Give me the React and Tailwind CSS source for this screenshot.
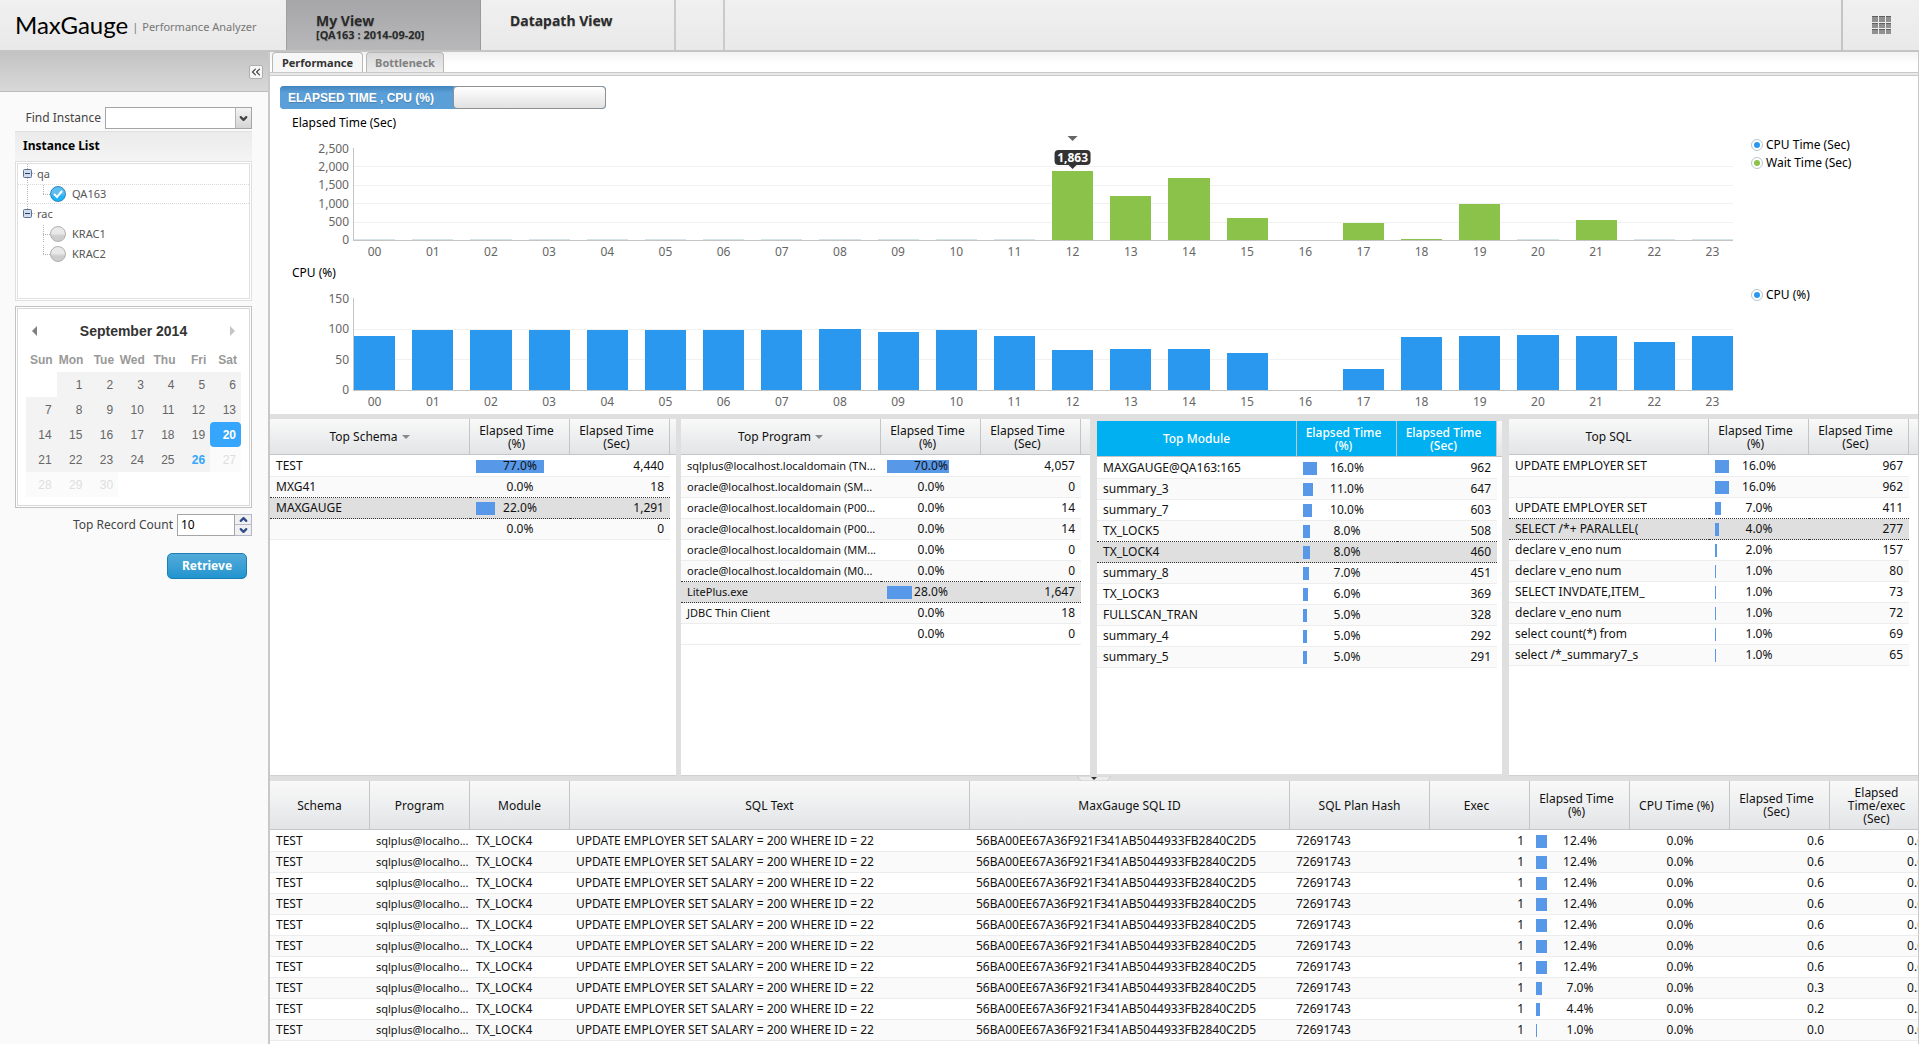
import { useState } from 'react';
import { ChevronDown, ChevronUp, ChevronsLeft } from 'lucide-react';

const HOURS = Array.from({ length: 24 }, (_, i) => String(i).padStart(2, '0'));

const ELAPSED = [20, 20, 20, 20, 20, 20, 20, 20, 20, 20, 20, 20, 1863, 1190, 1690, 595, 0, 450, 30, 965, 20, 545, 20, 20];
const CPU = [88, 98, 98, 98, 98, 98, 98, 98, 99, 95, 98, 88, 65, 67, 67, 61, 0, 34, 86, 88, 89, 88, 78, 88];

const SCHEMAS = [
  ['TEST', 77, '4,440'],
  ['MXG41', 0, '18'],
  ['MAXGAUGE', 22, '1,291'],
  ['', 0, '0'],
];

const PROGRAMS = [
  ['sqlplus@localhost.localdomain (TN...', 70, '4,057'],
  ['oracle@localhost.localdomain (SM...', 0, '0'],
  ['oracle@localhost.localdomain (P00...', 0, '14'],
  ['oracle@localhost.localdomain (P00...', 0, '14'],
  ['oracle@localhost.localdomain (MM...', 0, '0'],
  ['oracle@localhost.localdomain (M0...', 0, '0'],
  ['LitePlus.exe', 28, '1,647'],
  ['JDBC Thin Client', 0, '18'],
  ['', 0, '0'],
];

const MODULES = [
  ['MAXGAUGE@QA163:165', 16, '962'],
  ['summary_3', 11, '647'],
  ['summary_7', 10, '603'],
  ['TX_LOCK5', 8, '508'],
  ['TX_LOCK4', 8, '460'],
  ['summary_8', 7, '451'],
  ['TX_LOCK3', 6, '369'],
  ['FULLSCAN_TRAN', 5, '328'],
  ['summary_4', 5, '292'],
  ['summary_5', 5, '291'],
];

const SQLS = [
  ['UPDATE EMPLOYER SET', 16, '967'],
  ['', 16, '962'],
  ['UPDATE EMPLOYER SET', 7, '411'],
  ['SELECT /*+ PARALLEL(', 4, '277'],
  ['declare v_eno num', 2, '157'],
  ['declare v_eno num', 1, '80'],
  ['SELECT INVDATE,ITEM_', 1, '73'],
  ['declare v_eno num', 1, '72'],
  ['select count(*) from', 1, '69'],
  ['select /*_summary7_s', 1, '65'],
];

// [elapsed %, elapsed sec]
const SQL_ROWS = [
  [12.4, '0.6'],
  [12.4, '0.6'],
  [12.4, '0.6'],
  [12.4, '0.6'],
  [12.4, '0.6'],
  [12.4, '0.6'],
  [12.4, '0.6'],
  [7, '0.3'],
  [4.4, '0.2'],
  [1, '0.0'],
];

const WEEKS = [
  [null, 1, 2, 3, 4, 5, 6],
  [7, 8, 9, 10, 11, 12, 13],
  [14, 15, 16, 17, 18, 19, 20],
  [21, 22, 23, 24, 25, 26, 27],
  [28, 29, 30, null, null, null, null],
];

function Header() {
  return (
    <header className="flex h-[52px] shrink-0 border-b-2 border-[#c4c4c4] bg-linear-to-b from-[#f0f0f0] to-[#e9e9e9]">
      <div className="flex w-[287px] shrink-0 items-center gap-1 border-r border-[#a0a0a0] pl-[15px]">
        <h1 className="font-['Lato',sans-serif] text-2xl leading-6 text-black">MaxGauge</h1>
        <span className="flex gap-1 pt-1 text-[11px] whitespace-nowrap text-[#777]">
          <span>|</span>
          Performance Analyzer
        </span>
      </div>
      <nav className="flex">
        <button type="button" className="flex w-[194px] flex-col items-start justify-center border-r border-[#999] bg-linear-to-b from-[#a6a6a8] to-[#b8b8ba] pt-1 pl-[29px] text-left font-bold text-[#2b2b2b] text-shadow-xs">
          <span className="text-sm leading-4">My View</span>
          <span className="text-[11px] leading-3">[QA163 : 2014-09-20]</span>
        </button>
        <button type="button" className="flex w-[195px] items-start border-r-2 border-[#cacaca] pt-3 pl-[29px] text-sm leading-[18px] font-bold text-[#2b2b2b] text-shadow-xs">
          Datapath View
        </button>
        <div className="w-[49px] border-r-2 border-[#cacaca]" />
      </nav>
      <div className="flex-1" />
      <button type="button" aria-label="Menu" className="flex w-[78px] items-center justify-center border-l-2 border-[#c4c4c4]">
        <svg width="19" height="19" viewBox="0 0 19 19" className="fill-[#909090]">
          {[0, 7, 13].map((y) =>
            [0, 7, 14].map((x) => (
              <g key={`${x}-${y}`}>
                <rect x={x} y={y} width={x === 14 ? 5 : 6} height={y === 0 ? 6 : 5} />
                <rect x={x} y={y} width={x === 14 ? 5 : 6} height="1" className="fill-[#606060]" />
              </g>
            ))
          )}
        </svg>
      </button>
    </header>
  );
}

function Expander({ last }) {
  return (
    <svg width="19" height="20" viewBox="0 0 19 20" className="shrink-0">
      <path d={last ? 'M9.5 0V6' : 'M9.5 0V20'} stroke="#b5b5b5" strokeDasharray="1 1" />
      <rect x="5.5" y="5.5" width="8" height="8" rx="1" fill="#d3dcea" stroke="#5f7192" />
      <path d="M7 9.5h5" stroke="#1d3c78" />
      <path d="M14 9.5h3" stroke="#b5b5b5" strokeDasharray="1 1" />
    </svg>
  );
}

function TreeItem({ name, checked, onChange, last, trunk }) {
  return (
    <li className={checked ? 'border-y border-dotted border-[#dcdcdc]' : 'border-y border-transparent'}>
      <label className="flex h-[18px] items-center">
        <svg width="32" height="18" viewBox="0 0 32 18" className="shrink-0">
          {trunk && <path d="M9.5 0V18" stroke="#b5b5b5" strokeDasharray="1 1" />}
          <path d={last ? 'M25.5 0V9' : 'M25.5 0V18'} stroke="#b5b5b5" strokeDasharray="1 1" />
          <path d="M25 9.5h7" stroke="#b5b5b5" strokeDasharray="1 1" />
        </svg>
        <span className="grid shrink-0 place-items-center">
          <input
            type="checkbox"
            checked={checked}
            onChange={onChange}
            className="col-start-1 row-start-1 size-4 appearance-none rounded-full border border-[#b0b0b0] bg-linear-to-b from-[#e9e9e9] from-45% to-[#cdcdcd] to-65% checked:border-[#2a87bd] checked:from-[#5fbdf0] checked:to-[#1fb4fa]"
          />
          {checked && (
            <svg width="10" height="10" viewBox="0 0 10 10" className="pointer-events-none col-start-1 row-start-1">
              <path d="M1 5l3 3 5-6" fill="none" stroke="#fff" strokeWidth="2" />
            </svg>
          )}
        </span>
        <span className="pl-1.5">{name}</span>
      </label>
    </li>
  );
}

function InstanceTree() {
  const [selected, setSelected] = useState('QA163');
  const item = (name, props) => (
    <TreeItem name={name} checked={selected === name} onChange={() => setSelected(name)} {...props} />
  );

  return (
    <section>
      <h2 className="h-[30px] border-t border-[#e0e0e0] bg-linear-to-b from-[#ebebeb] to-[#f4f4f4] pl-2 text-xs leading-7 font-bold text-black">
        Instance List
      </h2>
      <div className="h-[140px] border border-[#e0e0e0] bg-white p-px">
        <ul className="h-full border border-[#e0e0e0] text-[11px] text-[#555]">
          <li>
            <div className="flex h-5 items-center"><Expander />qa</div>
            <ul>{item('QA163', { last: true, trunk: true })}</ul>
          </li>
          <li>
            <div className="flex h-5 items-center"><Expander last />rac</div>
            <ul>
              {item('KRAC1', {})}
              {item('KRAC2', { last: true })}
            </ul>
          </li>
        </ul>
      </div>
    </section>
  );
}

function dayClass(day) {
  if (day === 20) return 'rounded-sm bg-[#35a6fb] font-bold text-white';
  if (day === 26) return 'bg-[#f3f3f3] font-bold text-[#35a6fb]';
  if (day > 26) return 'bg-[#fbfbfb] text-[#dedede]';
  return 'bg-[#f3f3f3] text-[#666]';
}

function Calendar() {
  return (
    <section className="mt-[5px] border border-[#c2c2c2] bg-white p-px">
      <div className="border border-[#d8d8d8] px-2 pb-2 font-['Liberation_Sans',Arial,sans-serif]">
        <div className="flex h-[43px] items-center justify-between px-1.5">
          <button type="button" aria-label="Previous month" className="h-0 w-0 border-y-5 border-r-5 border-y-transparent border-r-[#808080]" />
          <h2 className="text-sm font-bold text-[#333]">September 2014</h2>
          <button type="button" aria-label="Next month" className="h-0 w-0 border-y-5 border-l-5 border-y-transparent border-l-[#c4c4c4]" />
        </div>
        <table className="w-full table-fixed text-right text-xs">
          <thead>
            <tr className="h-[18px] text-[#999]">
              {['Sun', 'Mon', 'Tue', 'Wed', 'Thu', 'Fri', 'Sat'].map((d) => (
                <th key={d} className="pr-1 pb-1 text-right font-bold">{d}</th>
              ))}
            </tr>
          </thead>
          <tbody>
            {WEEKS.map((week, i) => (
              <tr key={i} className="h-[25px]">
                {week.map((day, j) => (
                  <td key={j} className="p-0">
                    {day && (
                      <button type="button" className={`block h-[25px] w-full pr-[5px] text-right ${dayClass(day)}`}>
                        {day}
                      </button>
                    )}
                  </td>
                ))}
              </tr>
            ))}
          </tbody>
        </table>
      </div>
    </section>
  );
}

function Sidebar() {
  const [count, setCount] = useState(10);

  return (
    <aside className="w-[270px] shrink-0 border-r-2 border-[#c8c8c8] bg-[#fafafa] text-[#444]">
      <div className="flex h-10 items-center justify-end border-b border-[#bdbdbd] bg-linear-to-b from-[#c3c3c3] to-[#d8d8d8] pr-[5px]">
        <button type="button" aria-label="Collapse sidebar" className="flex h-3.5 w-3.5 items-center justify-center rounded-xs border border-[#b0b0b0] bg-[#f6f6f6] text-[#444]">
          <ChevronsLeft size={14} className="shrink-0" />
        </button>
      </div>
      <div className="pt-[15px] pr-4 pl-[15px]">
        <div className="flex items-center justify-end gap-1">
          <label htmlFor="instance">Find Instance</label>
          <div className="relative">
            <select id="instance" className="block h-[22px] w-[147px] appearance-none border border-[#a5a5a5] bg-white px-1" />
            <span className="pointer-events-none absolute inset-y-px right-px flex w-4 items-center justify-center border-l border-[#b5b5b5] bg-linear-to-b from-[#f4f4f4] to-[#d4d4d4] text-[#444]">
              <ChevronDown size={11} strokeWidth={5} />
            </span>
          </div>
        </div>
        <div className="h-0.5" />
        <InstanceTree />
        <Calendar />
        <div className="mt-1.5 flex items-center justify-end gap-1">
          <label htmlFor="count">Top Record Count</label>
          <div className="flex h-[22px] w-[75px]">
            <input
              id="count"
              type="text"
              value={count}
              onChange={(e) => setCount(Number(e.target.value) || 0)}
              className="w-[58px] border border-[#a5a5a5] bg-white px-[3px] text-black"
            />
            <span className="flex flex-1 flex-col border border-l-0 border-[#b5b8c8] bg-[#f0f0f0] text-[#304c8c]">
              <button type="button" aria-label="Increase" onClick={() => setCount(count + 1)} className="flex h-2.5 items-center justify-center overflow-hidden border-b border-[#b5b8c8]">
                <ChevronUp size={11} strokeWidth={5} className="shrink-0" />
              </button>
              <button type="button" aria-label="Decrease" onClick={() => setCount(count - 1)} className="flex h-2.5 items-center justify-center overflow-hidden">
                <ChevronDown size={11} strokeWidth={5} className="shrink-0" />
              </button>
            </span>
          </div>
        </div>
        <div className="mt-[17px] flex justify-end pr-[5px]">
          <button type="button" className="h-[26px] w-20 rounded-[5px] border border-[#1b7fb5] bg-linear-to-b from-[#52abd9] to-[#2094cf] font-bold text-white">
            Retrieve
          </button>
        </div>
      </div>
    </aside>
  );
}

function Legend({ label, color }) {
  return (
    <label className="flex h-[18px] items-center gap-[3px] text-black">
      <input
        type="checkbox"
        defaultChecked
        className={`size-3 appearance-none rounded-full border border-[#b9c6cf] bg-clip-content p-0.5 ${color}`}
      />
      {label}
    </label>
  );
}

function BarChart({ title, values, max, ticks, color, idle, marker, legend }) {
  return (
    <section>
      <h3 className="h-4 pl-[22px] leading-4 text-black">{title}</h3>
      <div className="mt-[17px] flex">
        <div className="flex h-[93px] w-[84px] shrink-0 flex-col justify-between border-r border-[#c4c4c4] pr-1 text-right text-[#666]">
          {ticks.map((t) => (
            <span key={t} className="flex h-px items-center justify-end">{t}</span>
          ))}
        </div>
        <div className="min-w-0 flex-1">
          <div className="grid">
            <div className="col-start-1 row-start-1 flex h-[93px] flex-col justify-between">
              {ticks.map((t, i) => (
                <div key={t} className={i === 0 ? 'h-px' : 'h-px bg-[#f1f1f1]'} />
              ))}
            </div>
            <div className="z-10 col-start-1 row-start-1 grid h-[93px] grid-cols-24 items-end gap-[17px] border-b border-[#c4c4c4]">
              {values.map((v, i) => (
                <div
                  key={i}
                  className={`relative ${v > max / 100 ? color : idle}`}
                  style={{ height: `${v > 0 ? Math.max(1, Math.round((v / max) * 92)) : 0}px` }}
                >
                  {marker === i && (
                    <div className="absolute bottom-full left-1/2 mb-0.5 flex -translate-x-1/2 flex-col items-center">
                      <span className="mb-[9px] h-0 w-0 border-x-5 border-t-5 border-x-transparent border-t-[#666]" />
                      <span className="h-[15px] rounded-sm bg-[#333] px-[3px] text-xs leading-[15px] font-bold text-white">
                        {v.toLocaleString('en-US')}
                      </span>
                      <span className="h-0 w-0 border-x-4 border-t-4 border-x-transparent border-t-[#333]" />
                    </div>
                  )}
                </div>
              ))}
            </div>
          </div>
          <div className="grid grid-cols-24 gap-[17px] pt-[3px] text-center leading-4 text-[#666]">
            {HOURS.map((h) => (
              <span key={h}>{h}</span>
            ))}
          </div>
        </div>
        <div className="-mt-3 w-[185px] shrink-0 pl-[18px]">{legend}</div>
      </div>
    </section>
  );
}

function HeadCell({ children, active, numeric }) {
  return (
    <th
      className={`border-r border-b border-[#c5c5c5] leading-[13px] ${numeric ? 'pr-2.5 pl-1' : 'px-1'} ${
        active ? 'bg-[#00b0f0] font-medium text-white' : 'bg-linear-to-b from-[#f9f9f9] to-[#e2e4e6] font-normal'
      }`}
    >
      {children}
    </th>
  );
}

function PercentCell({ value, className }) {
  return (
    <td className={`px-1.5 ${className}`}>
      <div className="grid items-center">
        <div className="col-start-1 row-start-1 h-[13px] bg-[#5898e8]" style={{ width: `${value}%` }} />
        <span className="col-start-1 row-start-1 text-center">{value.toFixed(1)}%</span>
      </div>
    </td>
  );
}

function rowClass(i, selected) {
  const bg = i === selected ? 'bg-[#dfdfdf]' : i % 2 ? 'bg-[#fafafa]' : 'bg-white';
  const line = i === selected || i === selected - 1 ? 'border-dotted border-b-[#333]' : 'border-b-[#ededed]';
  return `border-b ${bg} ${line} ${i === 0 ? 'border-t border-t-white' : ''}`;
}

function TopPanel({ title, rows, selected, sortable, active, nameClass = '' }) {
  return (
    <section className={`min-w-0 overflow-hidden bg-white ${active ? 'border-2 border-[#dfdfdf]' : 'border-b border-[#d0d0d0]'}`}>
      <table className="w-full table-fixed border-separate border-spacing-0">
        <colgroup>
          <col className="w-[200px]" />
          <col className="w-[100px]" />
          <col className="w-[100px]" />
          <col />
        </colgroup>
        <thead>
          <tr className="h-9">
            <HeadCell active={active}>
              <span className="inline-flex items-center gap-1">
                {title}
                {sortable && <span className="h-0 w-0 border-x-4 border-t-4 border-x-transparent border-t-[#888]" />}
              </span>
            </HeadCell>
            <HeadCell active={active} numeric>Elapsed Time<br />(%)</HeadCell>
            <HeadCell active={active} numeric>Elapsed Time<br />(Sec)</HeadCell>
            <th className="border-b border-[#c5c5c5] bg-linear-to-b from-[#f9f9f9] to-[#e2e4e6]" />
          </tr>
        </thead>
        <tbody>
          {rows.map(([name, pct, sec], i) => {
            const cls = rowClass(i, selected);
            return (
              <tr key={i} className={i === 0 ? 'h-[22px]' : 'h-[21px]'}>
                <td className={`pl-1.5 whitespace-nowrap ${nameClass} ${cls}`}>{name}</td>
                <PercentCell value={pct} className={cls} />
                <td className={`pr-1.5 text-right ${cls}`}>{sec}</td>
                <td />
              </tr>
            );
          })}
        </tbody>
      </table>
    </section>
  );
}

function SqlTable() {
  return (
    <section className="shrink-0 overflow-hidden bg-white pb-[3px]">
      <table className="w-[1660px] table-fixed border-separate border-spacing-0">
        <colgroup>
          <col className="w-[100px]" />
          <col className="w-[100px]" />
          <col className="w-[100px]" />
          <col className="w-[400px]" />
          <col className="w-[320px]" />
          <col className="w-[140px]" />
          <col className="w-[100px]" />
          <col className="w-[100px]" />
          <col className="w-[100px]" />
          <col className="w-[100px]" />
          <col className="w-[100px]" />
        </colgroup>
        <thead>
          <tr className="h-[49px]">
            <HeadCell>Schema</HeadCell>
            <HeadCell>Program</HeadCell>
            <HeadCell>Module</HeadCell>
            <HeadCell>SQL Text</HeadCell>
            <HeadCell>MaxGauge SQL ID</HeadCell>
            <HeadCell>SQL Plan Hash</HeadCell>
            <HeadCell numeric>Exec</HeadCell>
            <HeadCell numeric>Elapsed Time<br />(%)</HeadCell>
            <HeadCell numeric>CPU Time (%)</HeadCell>
            <HeadCell numeric>Elapsed Time<br />(Sec)</HeadCell>
            <HeadCell numeric>Elapsed<br />Time/exec<br />(Sec)</HeadCell>
          </tr>
        </thead>
        <tbody>
          {SQL_ROWS.map(([pct, sec], i) => {
            const cls = rowClass(i, -1);
            return (
              <tr key={i} className={i === 0 ? 'h-[22px]' : 'h-[21px]'}>
                <td className={`pl-1.5 ${cls}`}>TEST</td>
                <td className={`pl-1.5 text-[11px] whitespace-nowrap ${cls}`}>sqlplus@localho...</td>
                <td className={`pl-1.5 ${cls}`}>TX_LOCK4</td>
                <td className={`pl-1.5 ${cls}`}>UPDATE EMPLOYER SET SALARY = 200 WHERE ID = 22</td>
                <td className={`pl-1.5 ${cls}`}>56BA00EE67A36F921F341AB5044933FB2840C2D5</td>
                <td className={`pl-1.5 ${cls}`}>72691743</td>
                <td className={`pr-1.5 text-right ${cls}`}>1</td>
                <PercentCell value={pct} className={cls} />
                <td className={`text-center ${cls}`}>0.0%</td>
                <td className={`pr-1.5 text-right ${cls}`}>{sec}</td>
                <td className={`pr-1.5 text-right ${cls}`}>{sec}</td>
              </tr>
            );
          })}
        </tbody>
      </table>
    </section>
  );
}

export default function App() {
  const [wide, setWide] = useState(false);

  return (
    <div className="flex min-h-screen flex-col bg-white font-['Noto_Sans','Open_Sans',sans-serif] text-xs leading-4 text-[#111]">
      <Header />
      <div className="flex flex-1">
        <Sidebar />
        <main className="flex min-w-0 flex-1 flex-col overflow-hidden border-r border-[#c8c8c8]">
          <div role="tablist" className="flex h-[21px] items-end gap-[3px] border-b border-[#c8c8c8] bg-linear-to-b from-[#f2f2f2] to-white to-60% pl-0.5 text-[11px] font-bold">
            <button type="button" role="tab" aria-selected="true" className="h-5 w-[91px] rounded-t-sm border border-b-0 border-[#b8b8b8] bg-[#f7f7f7] text-[#333]">
              Performance
            </button>
            <button type="button" role="tab" aria-selected="false" className="h-5 w-[78px] rounded-t-sm border border-b-0 border-[#b8b8b8] bg-linear-to-b from-[#d8d8d8] to-[#ececec] text-[#808080]">
              Bottleneck
            </button>
          </div>
          <div className="h-[3px] border-b border-[#c8c8c8] bg-[#e9e9e9]" />

          <div className="pt-2.5 pb-1">
            <button
              type="button"
              role="switch"
              aria-checked={wide}
              onClick={() => setWide(!wide)}
              className="mb-1.5 ml-2.5 flex h-[23px] w-[326px] overflow-hidden rounded-[4px] bg-[#5b9fd8] font-['Liberation_Sans',Arial,sans-serif] font-bold text-white"
            >
              <span className="flex h-full flex-1 items-center bg-linear-to-b from-[#4284bd] to-[#5b9fd8] to-30% pl-2 text-shadow-xs">
                ELAPSED TIME , CPU (%)
              </span>
              <span className="h-full w-[153px] rounded-[4px] border border-[#909090] bg-linear-to-b from-white to-[#e2e2e2]" />
            </button>
            <div className="flex flex-col gap-[5px]">
              <BarChart
                title="Elapsed Time (Sec)"
                values={ELAPSED}
                max={2500}
                ticks={['2,500', '2,000', '1,500', '1,000', '500', '0']}
                color="bg-[#8bc34a]"
                idle="bg-[#d5e4e6]"
                marker={12}
                legend={
                  <>
                    <Legend label="CPU Time (Sec)" color="checked:bg-[#2b98f0]" />
                    <Legend label="Wait Time (Sec)" color="checked:bg-[#8bc34a]" />
                  </>
                }
              />
              <BarChart
                title="CPU (%)"
                values={CPU}
                max={150}
                ticks={['150', '100', '50', '0']}
                color="bg-[#2b98f0]"
                idle="bg-white"
                legend={<Legend label="CPU (%)" color="checked:bg-[#2b98f0]" />}
              />
            </div>
          </div>

          <div className="grid flex-1 grid-cols-[406fr_409fr_409fr_409fr] gap-[5px] border-t-5 border-[#dfdfdf] bg-[#dfdfdf]">
            <TopPanel title="Top Schema" rows={SCHEMAS} selected={2} sortable />
            <TopPanel title="Top Program" rows={PROGRAMS} selected={6} sortable nameClass="text-[11px]" />
            <TopPanel title="Top Module" rows={MODULES} selected={4} active />
            <TopPanel title="Top SQL" rows={SQLS} selected={3} />
          </div>

          <div className="flex h-[5px] shrink-0 justify-center bg-[#dfdfdf]">
            <button type="button" aria-label="Collapse panels" className="block">
              <svg width="34" height="5" viewBox="0 0 34 5" className="block">
                <path d="M0 0h34l-4 5H4z" fill="#ececec" stroke="#ccc" />
                <path d="M14 1h6l-3 3z" fill="#333" />
              </svg>
            </button>
          </div>

          <SqlTable />
        </main>
      </div>
    </div>
  );
}
